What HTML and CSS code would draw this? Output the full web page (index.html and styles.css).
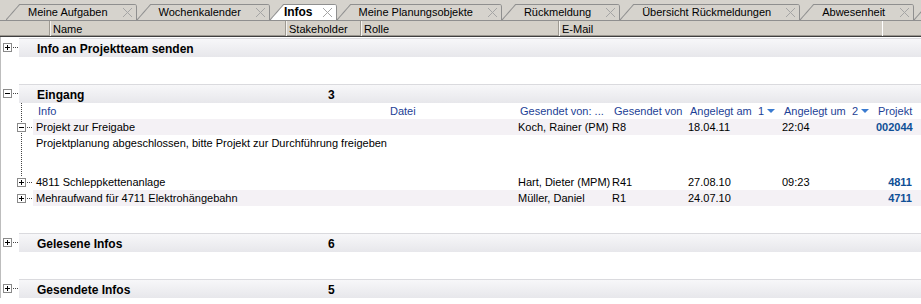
FILE: index.html
```html
<!DOCTYPE html>
<html lang="de">
<head>
    <meta charset="UTF-8">
    <title>Infos</title>
    <link rel="stylesheet" href="styles.css">
</head>
<body>
    <div class="tabbar">
        <div class="tab"><span class="label">Meine Aufgaben</span><span class="close"></span></div>
        <div class="tab"><span class="label">Wochenkalender</span><span class="close"></span></div>
        <div class="tab active"><span class="label">Infos</span><span class="close"></span></div>
        <div class="tab"><span class="label">Meine Planungsobjekte</span><span class="close"></span></div>
        <div class="tab"><span class="label">Rückmeldung</span><span class="close"></span></div>
        <div class="tab"><span class="label">Übersicht Rückmeldungen</span><span class="close"></span></div>
        <div class="tab"><span class="label">Abwesenheit</span><span class="close"></span></div>
        <div class="tab"></div>
    </div>

    <div class="colheads">
        <div class="colhead cTree"></div>
        <div class="colhead cName">Name</div>
        <div class="colhead cStake">Stakeholder</div>
        <div class="colhead cRole">Rolle</div>
        <div class="colhead cMail">E-Mail</div>
        <div class="colhead cRest"></div>
    </div>

    <div class="tree">
        <section class="group">
            <div class="groupHead">
                <span class="node"><span class="toggle plus"></span></span>
                <div class="band"><span class="groupName">Info an Projektteam senden</span></div>
            </div>
        </section>

        <section class="group">
            <div class="groupHead">
                <span class="node"><span class="toggle minus"></span></span>
                <div class="band"><span class="groupName">Eingang</span><span class="groupCount">3</span></div>
            </div>
            <div class="children">
                <div class="row subhead">
                    <span></span>
                    <span>Info</span>
                    <span>Datei</span>
                    <span>Gesendet von: ...</span>
                    <span>Gesendet von</span>
                    <span class="sortable">Angelegt am <span class="sort">1</span></span>
                    <span class="sortable">Angelegt um <span class="sort">2</span></span>
                    <span>Projekt</span>
                </div>
                <div class="row shaded">
                    <span class="node"><span class="toggle minus"></span></span>
                    <span>Projekt zur Freigabe</span>
                    <span></span>
                    <span>Koch, Rainer (PM)</span>
                    <span>R8</span>
                    <span>18.04.11</span>
                    <span>22:04</span>
                    <span class="proj">002044</span>
                </div>
                <div class="desc">Projektplanung abgeschlossen, bitte Projekt zur Durchführung freigeben</div>
                <div class="row">
                    <span class="node"><span class="toggle plus"></span></span>
                    <span>4811 Schleppkettenanlage</span>
                    <span></span>
                    <span>Hart, Dieter (MPM)</span>
                    <span>R41</span>
                    <span>27.08.10</span>
                    <span>09:23</span>
                    <span class="proj">4811</span>
                </div>
                <div class="row shaded">
                    <span class="node"><span class="toggle plus"></span></span>
                    <span>Mehraufwand für 4711 Elektrohängebahn</span>
                    <span></span>
                    <span>Müller, Daniel</span>
                    <span>R1</span>
                    <span>24.07.10</span>
                    <span></span>
                    <span class="proj">4711</span>
                </div>
            </div>
        </section>

        <section class="group">
            <div class="groupHead">
                <span class="node"><span class="toggle plus"></span></span>
                <div class="band"><span class="groupName">Gelesene Infos</span><span class="groupCount">6</span></div>
            </div>
        </section>

        <section class="group">
            <div class="groupHead">
                <span class="node"><span class="toggle plus"></span></span>
                <div class="band"><span class="groupName">Gesendete Infos</span><span class="groupCount">5</span></div>
            </div>
        </section>
    </div>
</body>
</html>
```

FILE: styles.css
```css
body {
    margin: 0;
    width: 921px;
    height: 304px;
    overflow: hidden;
    background-color: #fff;
    font-family: "Liberation Sans", Arial, sans-serif;
    font-size: 11px;
    color: #000;
}

/* tabs */
.tabbar {
    display: flex;
    align-items: flex-end;
    height: 20px;
    padding-left: 6px;
    background-color: #d6d3cd;
    border-bottom: 1px solid #8f8f8f;
    overflow: hidden;
}
.tab {
    flex-shrink: 0;
    display: flex;
    align-items: center;
    height: 16px;
    padding: 0 4px 0 22px;
    border-right: 1px solid #8f8f8f;
    border-top-right-radius: 3px;
    white-space: nowrap;
    background:
        linear-gradient(to bottom right, #d6d3cd calc(50% - 1px), #8f8f8f 50%, transparent calc(50% + 1px)) 0 0 / 14px 100% no-repeat,
        linear-gradient(#8f8f8f, #8f8f8f) 14px 0 / 100% 1px no-repeat;
}
.tab.active {
    padding-left: 14px;
    background-color: #fff;
}
.tab.active .label {
    font-weight: bold;
    font-size: 12px;
}
.close {
    width: 9px;
    height: 9px;
    margin-left: 15px;
    background:
        linear-gradient(45deg, transparent 45%, #a5a5a5 45%, #a5a5a5 55%, transparent 55%),
        linear-gradient(-45deg, transparent 45%, #a5a5a5 45%, #a5a5a5 55%, transparent 55%);
}
.tab.active .close {
    margin-left: 10px;
}

/* column headers */
.colheads {
    display: flex;
    height: 15px;
    background-color: #d4d0c8;
    border-bottom: 1px solid #3f3f3f;
    box-shadow: inset 0 -1px #9a968f;
    line-height: 16px;
}
.colhead {
    padding-left: 3px;
    border-left: 1px solid #9d9991;
    box-shadow: inset 1px 0 #f4f2ee;
    white-space: nowrap;
}
.cTree {
    width: 49px;
    padding: 0;
    border: none;
    box-shadow: none;
}
.cName { width: 232px; }
.cStake { width: 71px; }
.cRole { width: 194px; }
.cMail { width: 320px; }
.cRest {
    flex: 1;
    border-left-color: #fff;
    box-shadow: none;
}

/* tree */
.tree {
    padding-top: 1px;
    border-left: 1px solid #bdbdbd;
}
.group {
    padding-bottom: 27px;
}
.group:last-child {
    padding-bottom: 0;
}
.groupHead {
    display: flex;
    align-items: center;
}
.groupHead .node {
    width: 16px;
    padding-left: 2px;
}
.band {
    flex: 1;
    display: flex;
    height: 18px;
    padding-left: 18px;
    border-top: 1px solid #dadade;
    background: linear-gradient(#f7f7f9, #e7e7eb);
    font-weight: bold;
    font-size: 12px;
    line-height: 20px;
}
.groupName {
    width: 291px;
}

.node {
    display: flex;
    align-items: center;
}
.node::after {
    content: '';
    width: 5px;
    margin-left: 1px;
    border-top: 1px dotted #444;
}
.toggle {
    width: 9px;
    height: 9px;
    box-sizing: border-box;
    border: 1px solid #8a8a8a;
    background: #fff;
}
.toggle.minus {
    background:
        linear-gradient(#000, #000) center / 5px 1px no-repeat,
        #fff;
}
.toggle.plus {
    background:
        linear-gradient(#000, #000) center / 5px 1px no-repeat,
        linear-gradient(#000, #000) center / 1px 5px no-repeat,
        #fff;
}

.children {
    background: repeating-linear-gradient(#444 0, #444 1px, transparent 1px, transparent 2px) 20px 0 / 1px 74px no-repeat;
}
.row {
    display: grid;
    grid-template-columns: 35px 352px 130px 94px 76px 94px 94px 36px;
    height: 16px;
    line-height: 16px;
    white-space: nowrap;
}
.row .node {
    padding-left: 16px;
}
.shaded {
    background: linear-gradient(to right, transparent 32px, #f4f1f5 32px);
}
.subhead {
    color: #1d3f96;
}
.subhead > span {
    padding-left: 2px;
}
.sortable {
    display: flex;
    justify-content: space-between;
    padding-right: 7px;
}
.sort {
    display: flex;
    align-items: center;
}
.sort::after {
    content: '';
    margin-left: 3px;
    border-left: 4px solid transparent;
    border-right: 4px solid transparent;
    border-top: 4px solid #3a7bd0;
}
.proj {
    text-align: right;
    font-weight: bold;
    color: #0f4f96;
}
.desc {
    height: 39px;
    padding-left: 35px;
    line-height: 17px;
}
```
